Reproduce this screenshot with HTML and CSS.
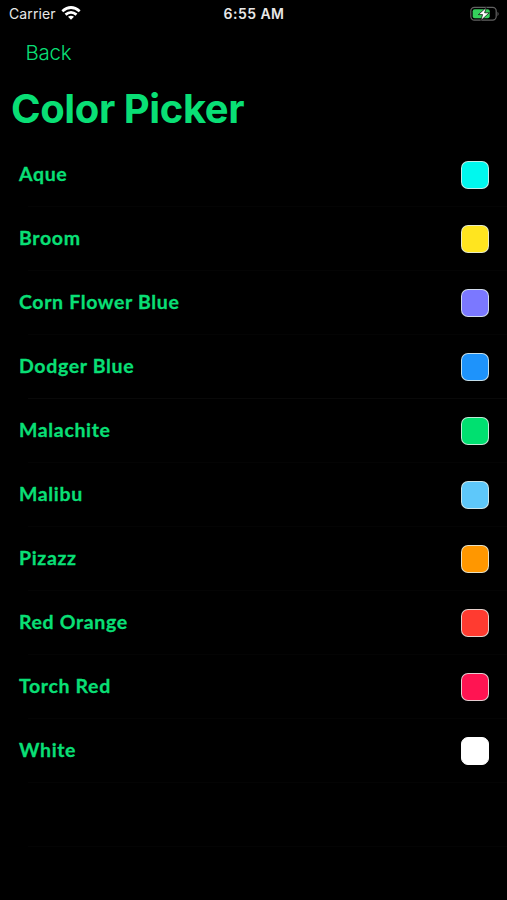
FILE: index.html
```html
<!DOCTYPE html>
<html lang="en">
<head>
<meta charset="utf-8">
<title>Color Picker</title>
<link rel="stylesheet" href="styles.css">
</head>
<body>
<div class="status">
  <div class="carrier"><span>Carrier</span>
    <svg class="wifi" width="20" height="15" viewBox="0 0 20 15" fill="none" stroke="#fff" stroke-width="2.7"><path d="M1.3 5.2Q10-2.2 18.7 5.2M4.5 8.6Q10 4 15.5 8.6"/><path d="M7 10.8Q10 8.5 13 10.8L10 13.8Z" fill="#fff" stroke="none"/></svg>
  </div>
  <div class="time">6:55 AM</div>
  <svg class="battery" width="30" height="16" viewBox="0 0 30 16"><rect x=".8" y="1.3" width="25.4" height="12.9" rx="3.6" fill="none" stroke="#626262" stroke-width="1.2"/><path d="M27.5 5.8q2.3 2.2 0 4.4z" fill="#626262"/><rect x="2.7" y="3.2" width="17" height="9.1" rx="2" fill="#35d05c"/><path d="M16.4 1.4 8.4 8.6h4.2l-1.8 6 8.4-7.8h-4.6z" fill="#fff" stroke="#000" stroke-width=".7"/></svg>
</div>
<nav class="nav"><a class="back">Back</a></nav>
<h1 class="title">Color Picker</h1>
<ul class="list">
  <li class="row"><span class="name">Aque</span><i class="swatch aque"></i></li>
  <li class="row"><span class="name">Broom</span><i class="swatch broom"></i></li>
  <li class="row"><span class="name">Corn Flower Blue</span><i class="swatch corn"></i></li>
  <li class="row strong"><span class="name">Dodger Blue</span><i class="swatch dodger"></i></li>
  <li class="row"><span class="name">Malachite</span><i class="swatch malachite"></i></li>
  <li class="row"><span class="name">Malibu</span><i class="swatch malibu"></i></li>
  <li class="row"><span class="name">Pizazz</span><i class="swatch pizazz"></i></li>
  <li class="row"><span class="name">Red Orange</span><i class="swatch red"></i></li>
  <li class="row"><span class="name">Torch Red</span><i class="swatch torch"></i></li>
  <li class="row"><span class="name">White</span><i class="swatch white"></i></li>
  <li class="row"></li>
</ul>
</body>
</html>
```
FILE: styles.css
```css
* { box-sizing: border-box; }
body { margin: 0; height: 900px; overflow: hidden; background: #000; font-family: Inter, sans-serif; color: #09df75; }
.status { display: grid; grid-template-columns: 1fr auto 1fr; align-items: center; height: 27px; padding: 0 7px 0 9px; color: #e8e8e8; }
.carrier { display: flex; align-items: center; gap: 5px; font-size: 14px; letter-spacing: .1px; }
.wifi { margin-top: -1px; }
.time { font-size: 14px; font-weight: 600; letter-spacing: .45px; margin-right: 1px; }
.battery { justify-self: end; }
.nav { height: 51px; padding: 0 25.5px; line-height: 51px; }
.back { font-size: 20.5px; font-weight: 300; letter-spacing: -.3px; }
.title { margin: 0; height: 65px; padding-left: 11px; line-height: 61px; font-size: 40px; font-weight: 700; letter-spacing: -.4px; white-space: nowrap; }
.list { margin: 0; padding: 0; list-style: none; }
.row { display: flex; align-items: center; justify-content: space-between; height: 64px; padding: 0 18px 1px 19px; background: linear-gradient(#040404, #040404) 28px 100% / 100% 1px no-repeat; }
.row.strong { background-image: linear-gradient(#090909, #090909); }
.name { padding-bottom: 1px; font-family: Lato, sans-serif; font-size: 19.5px; font-weight: 700; letter-spacing: .65px; line-height: 28px; -webkit-text-stroke: .3px currentColor; }
.swatch { width: 28px; height: 28px; border: 1.5px solid rgba(225, 235, 230, .85); border-radius: 7px; }
.aque { background: #00f8ee; }
.broom { background: #ffe51f; }
.corn { background: #7b78ff; }
.dodger { background: #1e93fb; }
.malachite { background: #00e070; }
.malibu { background: #5ec8fa; }
.pizazz { background: #ff9700; }
.red { background: #ff3b30; }
.torch { background: #ff1452; }
.white { background: #fff; border-color: #fff; }
```
